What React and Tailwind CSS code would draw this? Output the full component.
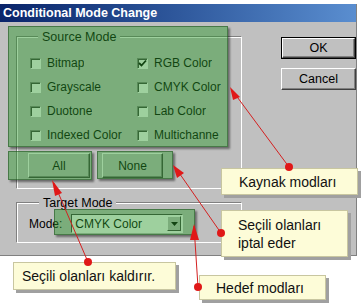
import React from 'react';

const font = { fontFamily: '"Liberation Sans", Arial, sans-serif' };

const CheckBox = ({ label, checked, clip }) => (
  <div className="flex items-center h-[24px]">
    <span className="w-[11px] h-[11px] bg-white border-t border-l border-t-[#808080] border-l-[#808080] border-b border-r border-b-white border-r-white shadow-[inset_1px_1px_0_#404040] flex items-center justify-center shrink-0">
      {checked && (
        <svg width="9" height="9" viewBox="0 0 9 9">
          <path d="M1 4 L3.5 6.5 L8 1.5" stroke="#000" strokeWidth="1.8" fill="none" />
        </svg>
      )}
    </span>
    <span className={"ml-[6px] whitespace-nowrap overflow-hidden " + (clip ? 'w-[85px]' : '')}>{label}</span>
  </div>
);

const WinButton = ({ children, className }) => (
  <div className={"flex items-center justify-center bg-[#c0c0c0] border border-t-white border-l-white border-r-[#404040] border-b-[#404040] shadow-[inset_-1px_-1px_0_#808080] " + className}>
    {children}
  </div>
);

const Callout = ({ className, children }) => (
  <div className={"absolute bg-[#fdfcd8] border border-[#c8c6a0] shadow-[3px_3px_0_#a0a0a0] text-[14px] leading-[18px] text-[#111] " + className}>
    {children}
  </div>
);

const App = () => {
  return (
    <div className="w-[362px] h-[305px] bg-white relative overflow-hidden text-black" style={font}>
      {/* dialog */}
      <div className="mt-[4px] w-[357px] h-[252px] bg-[#c0c0c0] relative border-b border-r border-b-[#808080] border-r-[#808080]">
        <div className="h-[18px] bg-gradient-to-r from-[#0a246a] to-[#5a8ed0] text-white font-bold text-[12.5px] leading-[18px] pl-[3px]">
          Conditional Mode Change
        </div>

        <div className="flex text-[12px]">
          <div className="pl-[17px] pt-[15px] w-[242px] box-content">
            {/* source mode */}
            <div className="relative w-[225px] h-[152px] border border-white shadow-[-1px_-1px_0_#808080]">
              <span className="absolute -top-[8px] left-[20px] px-[4px] bg-[#c0c0c0] text-[12.5px] leading-[14px]">Source Mode</span>
              <div className="pt-[13px] pl-[12px] grid grid-cols-[107px_1fr]">
                <CheckBox label="Bitmap" />
                <CheckBox label="RGB Color" checked />
                <CheckBox label="Grayscale" />
                <CheckBox label="CMYK Color" />
                <CheckBox label="Duotone" />
                <CheckBox label="Lab Color" />
                <CheckBox label="Indexed Color" clip />
                <CheckBox label="Multichanne" />
              </div>
              <div className="flex gap-[12px] pl-[10px] mt-[6px]">
                <WinButton className="w-[62px] h-[25px]">All</WinButton>
                <WinButton className="w-[61px] h-[25px]">None</WinButton>
              </div>
            </div>

            {/* target mode */}
            <div className="relative mt-[14px] w-[225px] h-[40px] border border-white shadow-[-1px_-1px_0_#808080] flex items-center">
              <span className="absolute -top-[8px] left-[21px] px-[4px] bg-[#c0c0c0] text-[12.5px] leading-[14px]">Target Mode</span>
              <span className="ml-[11px] mt-[1px]">Mode:</span>
              <div className="ml-[9px] mt-[1px] w-[112px] h-[19px] bg-white border border-t-[#404040] border-l-[#404040] border-b-white border-r-white flex items-center">
                <span className="pl-[3px] flex-1">CMYK Color</span>
                <div className="w-[14px] h-[15px] bg-[#c0c0c0] border border-t-white border-l-white border-r-[#404040] border-b-[#404040] flex items-center justify-center mr-[1px]">
                  <svg width="7" height="4" viewBox="0 0 7 4"><path d="M0 0 L7 0 L3.5 4 Z" fill="#000" /></svg>
                </div>
              </div>
            </div>
          </div>

          {/* right buttons */}
          <div className="ml-[32px] pt-[15px] flex flex-col gap-[9px] text-[12.5px]">
            <div className="border border-black">
              <WinButton className="w-[73px] h-[20px]">OK</WinButton>
            </div>
            <WinButton className="w-[75px] h-[22px]">Cancel</WinButton>
          </div>
        </div>

        {/* green highlights */}
        <div className="absolute left-[8px] top-[22px] w-[220px] h-[121px] bg-[rgba(40,150,40,0.45)] border border-[rgba(20,70,20,0.5)] shadow-[2px_2px_2px_rgba(0,0,0,0.45)]" />
        <div className="absolute left-[8px] top-[147px] w-[84px] h-[29px] bg-[rgba(40,150,40,0.45)] border border-[rgba(20,70,20,0.5)] shadow-[2px_2px_2px_rgba(0,0,0,0.45)]" />
        <div className="absolute left-[97px] top-[147px] w-[76px] h-[28px] bg-[rgba(40,150,40,0.45)] border border-[rgba(20,70,20,0.5)] shadow-[2px_2px_2px_rgba(0,0,0,0.45)]" />
        <div className="absolute left-[54px] top-[205px] w-[141px] h-[26px] bg-[rgba(40,150,40,0.45)] border border-[rgba(20,70,20,0.5)] shadow-[2px_2px_2px_rgba(0,0,0,0.45)]" />
      </div>

      {/* callouts */}
      <Callout className="left-[221px] top-[168px] w-[137px] h-[27px] pl-[17px] pt-[4px]">Kaynak modları</Callout>
      <Callout className="left-[221px] top-[210px] w-[127px] h-[47px] pl-[16px] pt-[5px]">
        <div>Seçili olanları</div>
        <div>iptal eder</div>
      </Callout>
      <Callout className="left-[199px] top-[275px] w-[127px] h-[25px] pl-[16px] pt-[3px]">Hedef modları</Callout>
      <Callout className="left-[13px] top-[262px] w-[163px] h-[28px] pl-[8px] pt-[4px]">Seçili olanları kaldırır.</Callout>

      {/* arrows */}
      <svg className="absolute left-0 top-0" width="362" height="305" viewBox="0 0 362 305">
        <g stroke="#d42020" strokeWidth="1" fill="none">
          <line x1="289" y1="167" x2="232" y2="90" />
          <line x1="221" y1="233" x2="175" y2="167" />
          <line x1="198" y1="287" x2="194" y2="226" />
          <line x1="88" y1="262" x2="54" y2="183" />
        </g>
        <g fill="#e01818">
          <polygon points="230,87 240,97 233,100" />
          <polygon points="173,165 184,173 177,178" />
          <polygon points="194,224 199,240 190,240" />
          <polygon points="52,180 62,193 55,196" />
          <circle cx="289" cy="167" r="4" />
          <circle cx="221" cy="233" r="4" />
          <circle cx="198" cy="287" r="4" />
          <circle cx="88" cy="262" r="4" />
        </g>
      </svg>
    </div>
  );
};

export default App;
